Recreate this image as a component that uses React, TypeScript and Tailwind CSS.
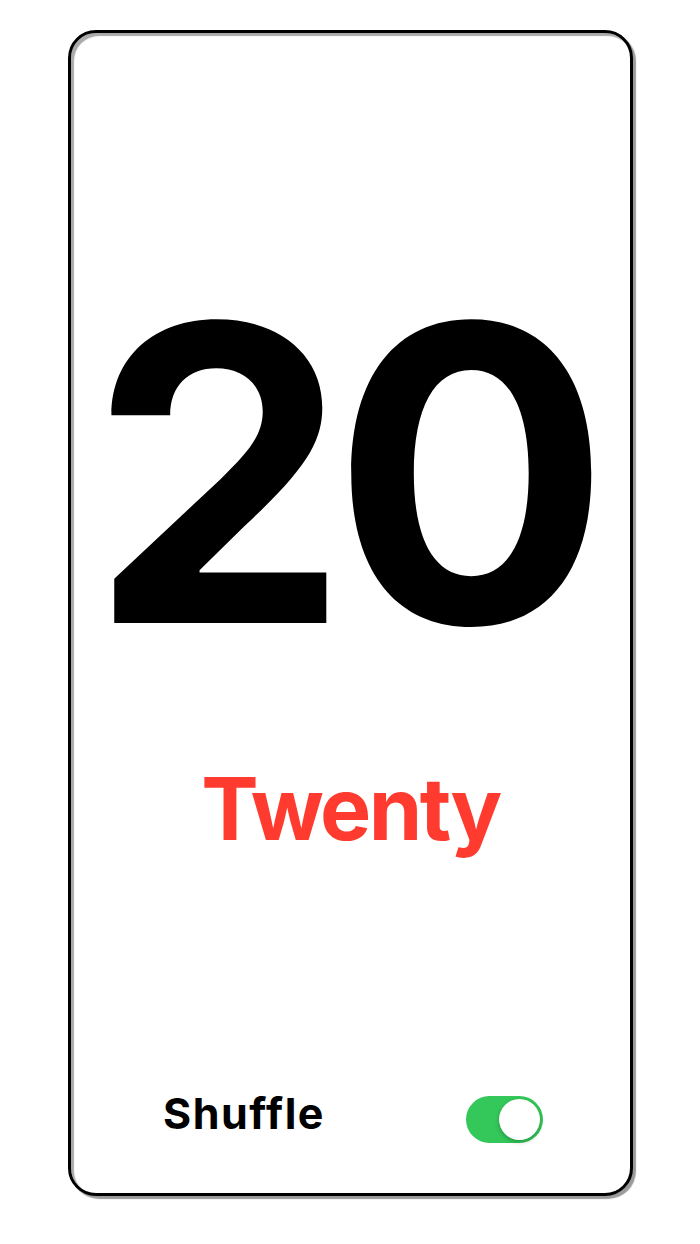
import { useState } from 'react';

const FONT = { fontFamily: 'Inter, "Noto Sans", sans-serif' };

function Toggle({ on, onChange }: { on: boolean; onChange: (v: boolean) => void }) {
  return (
    <button
      type="button"
      onClick={() => onChange(!on)}
      className={`relative w-[77px] h-[47px] rounded-full transition-colors ${on ? 'bg-[#34c759]' : 'bg-[#e9e9eb]'}`}
    >
      <span
        className={`absolute top-[3px] h-[41px] w-[41px] rounded-full bg-white shadow-[0_2px_4px_rgba(0,0,0,0.25)] transition-all ${on ? 'left-[33px]' : 'left-[3px]'}`}
      />
    </button>
  );
}

export default function App() {
  const [shuffle, setShuffle] = useState(true);

  return (
    <div className="w-[700px] h-[1244px] bg-white pt-[30px] pl-[68px]" style={FONT}>
      <div className="w-[565px] h-[1166px] border-[3px] border-black rounded-[28px] bg-white shadow-[3px_3px_1px_#9a9a9a,inset_3px_3px_1px_#aaaaaa] flex flex-col items-center">
        <div className="mt-[234px] pr-[18px] text-[412px] leading-none font-bold text-black tracking-[-0.04em]">
          20
        </div>
        <div className="mt-[87px] text-[86px] leading-none font-bold text-[#ff3b30] tracking-[-0.03em]">
          Twenty
        </div>
        <div className="mt-auto mb-[50px] w-full pl-[92px] pr-[87px] flex items-center justify-between">
          <span className="text-[43px] leading-none font-bold text-black tracking-[0.035em] -mt-[12px]">
            Shuffle
          </span>
          <Toggle on={shuffle} onChange={setShuffle} />
        </div>
      </div>
    </div>
  );
}
